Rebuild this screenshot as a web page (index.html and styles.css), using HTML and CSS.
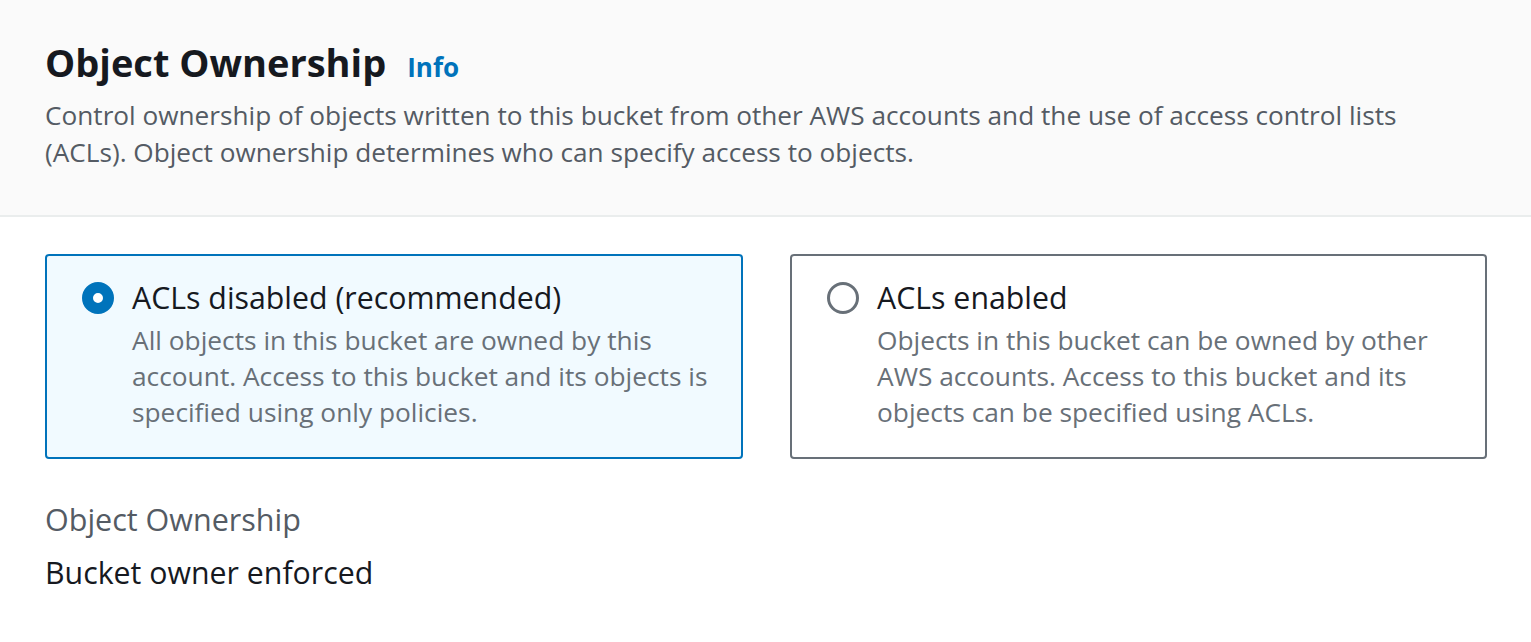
FILE: index.html
```html
<!DOCTYPE html>
<html lang="en">
<head>
<meta charset="utf-8">
<title>Object Ownership</title>
<link rel="stylesheet" href="styles.css">
</head>
<body>
<section class="panel">
  <header class="panel-header">
    <h2 class="title">Object Ownership <a class="info" href="#">Info</a></h2>
    <p class="desc">Control ownership of objects written to this bucket from other AWS accounts and the use of access control lists (ACLs). Object ownership determines who can specify access to objects.</p>
  </header>
  <div class="panel-body">
    <div class="tiles">
      <label class="tile selected">
        <span class="radio checked"></span>
        <span class="tile-text">
          <span class="tile-label">ACLs disabled (recommended)</span>
          <span class="tile-desc">All objects in this bucket are owned by this account. Access to this bucket and its objects is specified using only policies.</span>
        </span>
      </label>
      <label class="tile">
        <span class="radio"></span>
        <span class="tile-text">
          <span class="tile-label">ACLs enabled</span>
          <span class="tile-desc">Objects in this bucket can be owned by other AWS accounts. Access to this bucket and its objects can be specified using ACLs.</span>
        </span>
      </label>
    </div>
    <div class="field">
      <div class="field-label">Object Ownership</div>
      <div class="field-value">Bucket owner enforced</div>
    </div>
  </div>
</section>
</body>
</html>
```

FILE: styles.css
```css
* { box-sizing: border-box; }
html, body { margin: 0; padding: 0; background: #fff; }
body {
  font-family: "Open Sans", "Noto Sans", "Liberation Sans", sans-serif;
  color: #16191f;
  width: 1531px;
  height: 642px;
  overflow: hidden;
}
.panel-header {
  background: #fafafa;
  border-bottom: 2px solid #eaeded;
  padding: 38px 45px 0;
  height: 217px;
}
.title {
  margin: 0;
  font-size: 38px;
  font-weight: 700;
  line-height: 48px;
  color: #16191f;
  display: flex;
  align-items: baseline;
  gap: 21px;
}
.info {
  font-size: 26px;
  font-weight: 700;
  color: #0073bb;
  text-decoration: none;
}
.desc {
  margin: 6px 0 0;
  font-size: 26.2px;
  line-height: 37px;
  color: #545b64;
  max-width: 1400px;
}
.panel-body {
  padding: 37px 44px 0 45px;
}
.tiles {
  display: grid;
  grid-template-columns: 698px 697px;
  gap: 47px;
}
.tile {
  display: flex;
  align-items: flex-start;
  gap: 18px;
  border: 2px solid #687078;
  border-radius: 4px;
  padding: 22px 20px 22px 35px;
  height: 205px;
  background: #fff;
}
.tile.selected {
  border-color: #0073bb;
  background: #f1faff;
}
.radio {
  flex: none;
  width: 32px;
  height: 32px;
  margin-top: 4px;
  border-radius: 50%;
  border: 3px solid #687078;
  background: #fff;
}
.radio.checked {
  border: 11px solid #0073bb;
}
.tile-text { display: flex; flex-direction: column; }
.tile-label {
  font-size: 30.3px;
  line-height: 40px;
  color: #16191f;
}
.tile-desc {
  margin-top: 4px;
  font-size: 26.3px;
  line-height: 36px;
  color: #687078;
}
.field { margin-top: 40px; }
.field-label {
  font-size: 30.5px;
  line-height: 40px;
  color: #545b64;
}
.field-value {
  margin-top: 14px;
  font-size: 30.3px;
  line-height: 40px;
  color: #16191f;
}
```
